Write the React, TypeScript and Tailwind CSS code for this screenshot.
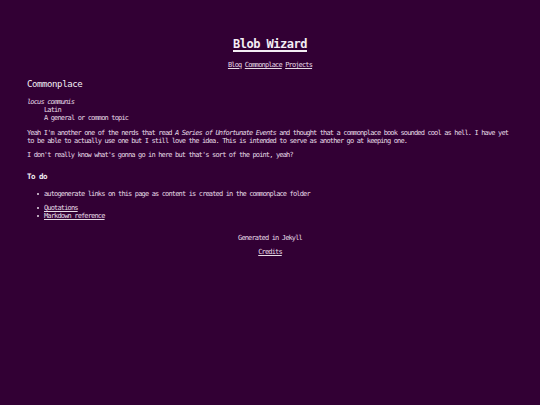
import React from "react";

const mono = { fontFamily: '"DejaVu Sans Mono", "Liberation Mono", monospace' };

function Bullet({ children }: { children: React.ReactNode }) {
  return (
    <div className="flex items-center h-[8px]">
      <span className="w-[17px] flex justify-start pl-[10px]">
        <span className="block w-[2px] h-[2px] rounded-full bg-[#e6dce6]" />
      </span>
      <span>{children}</span>
    </div>
  );
}

export default function App() {
  return (
    <div
      className="w-[540px] h-[405px] bg-[#320034] text-[#e6dce6] text-[7px] leading-[8px] tracking-[-0.85px] overflow-hidden"
      style={mono}
    >
      <div className="px-[27px]">
        <div className="pt-[36px] text-center h-[52px]">
          <a className="text-[12px] leading-[16px] tracking-[-0.5px] font-semibold text-[#f4eef4] underline decoration-2 underline-offset-[2px]">
            Blob Wizard
          </a>
        </div>
        <div className="mt-[9px] text-center h-[8px]">
          <a className="underline">Blog</a> <a className="underline">Commonplace</a>{" "}
          <a className="underline">Projects</a>
        </div>
        <div className="mt-[9px] h-[12px] text-[9px] leading-[12px] tracking-[-0.4px] text-[#f4eef4]">
          Commonplace
        </div>
        <div className="mt-[8px] italic">locus communis</div>
        <div className="pl-[17px]">Latin</div>
        <div className="pl-[17px]">A general or common topic</div>
        <p className="mt-[7px]">
          Yeah I'm another one of the nerds that read <i>A Series of Unfortunate Events</i> and
          thought that a commonplace book sounded cool as hell. I have yet to be able to actually
          use one but I still love the idea. This is intended to serve as another go at keeping one.
        </p>
        <p className="mt-[6px]">I don't really know what's gonna go in here but that's sort of the point, yeah?</p>
        <div className="mt-[13px] h-[10px] text-[7.5px] leading-[10px] tracking-[-0.5px] font-semibold text-[#f4eef4]">
          To do
        </div>
        <div className="mt-[8px]">
          <Bullet>autogenerate links on this page as content is created in the commonplace folder</Bullet>
        </div>
        <div className="mt-[6px]">
          <Bullet>
            <a className="underline">Quotations</a>
          </Bullet>
          <Bullet>
            <a className="underline">Markdown reference</a>
          </Bullet>
        </div>
        <div className="mt-[14px] text-center">Generated in Jekyll</div>
        <div className="mt-[6px] text-center">
          <a className="underline">Credits</a>
        </div>
      </div>
    </div>
  );
}
